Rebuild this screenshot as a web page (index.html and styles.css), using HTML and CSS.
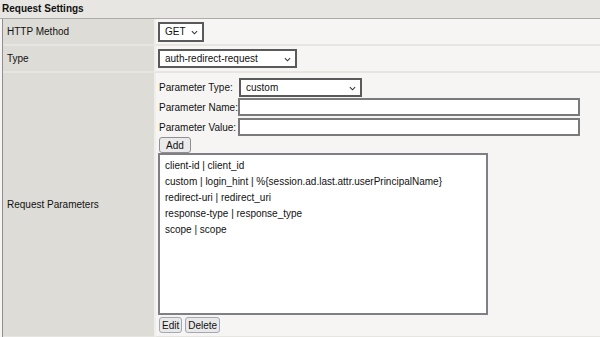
FILE: index.html
```html
<!DOCTYPE html>
<html lang="en">
<head>
  <meta charset="UTF-8" />
  <title>Request Settings</title>
  <link rel="stylesheet" href="styles.css">
</head>
<body>

  <div class="panel">
    <div class="panel-title">Request Settings</div>

    <table class="settings">
      <tr class="short">
        <th>HTTP Method</th>
        <td>
          <span class="dropdown method">
            <select><option>GET</option><option>POST</option></select>
            <svg viewBox="0 0 8 5"><path d="M1 1 L4 4 L7 1" /></svg>
          </span>
        </td>
      </tr>
      <tr class="short">
        <th>Type</th>
        <td>
          <span class="dropdown type">
            <select><option>auth-redirect-request</option></select>
            <svg viewBox="0 0 8 5"><path d="M1 1 L4 4 L7 1" /></svg>
          </span>
        </td>
      </tr>
      <tr>
        <th>Request Parameters</th>
        <td class="params">
          <div class="field first">
            <label>Parameter Type:</label>
            <span class="dropdown ptype">
              <select><option>custom</option></select>
              <svg viewBox="0 0 8 5"><path d="M1 1 L4 4 L7 1" /></svg>
            </span>
          </div>
          <div class="field">
            <label for="pname">Parameter Name:</label>
            <input type="text" id="pname">
          </div>
          <div class="field">
            <label for="pvalue">Parameter Value:</label>
            <input type="text" id="pvalue">
          </div>
          <button type="button" class="btn add">Add</button>

          <div class="listbox">
            <div>client-id | client_id</div>
            <div>custom | login_hint | %{session.ad.last.attr.userPrincipalName}</div>
            <div>redirect-uri | redirect_uri</div>
            <div>response-type | response_type</div>
            <div>scope | scope</div>
          </div>

          <div class="actions">
            <button type="button" class="btn small">Edit</button>
            <button type="button" class="btn small">Delete</button>
          </div>
        </td>
      </tr>
    </table>
  </div>

</body>
</html>
```

FILE: styles.css
```css
body {
  margin: 0;
  background-color: #f6f5f3;
  font-family: 'Liberation Sans', Arial, sans-serif;
  font-size: 10px;
  color: #111;
}

.panel-title {
  height: 18px;
  line-height: 17px;
  padding-left: 2px;
  background-color: #e8e6e2;
  border-bottom: 1px solid #aeaca8;
  font-weight: bold;
}

.settings {
  width: calc(100% - 2px);
  margin-left: 2px;
  border-collapse: separate;
  border-spacing: 0;
  border-left: 1px solid #8e8e8e;
}

.settings th,
.settings td {
  box-sizing: border-box;
  border-bottom: 2px solid #e7e5e1;
}

.settings th {
  width: 153px;
  padding: 0 0 0 4px;
  background-color: #dedcd7;
  border-right: 2px solid #efeeeb;
  text-align: left;
  font-weight: normal;
}

.settings td {
  padding: 0 0 0 2px;
  background-color: #f6f5f3;
}

.settings tr.short th,
.settings tr.short td {
  height: 27px;
}

.dropdown {
  position: relative;
  display: inline-block;
  vertical-align: middle;
}

.dropdown select {
  appearance: none;
  -webkit-appearance: none;
  display: block;
  box-sizing: border-box;
  height: 19px;
  margin: 0;
  padding: 0 0 0 5px;
  border: 2px solid #5a5a5a;
  border-radius: 0;
  background: #fff;
  font: inherit;
  color: #111;
}

.dropdown svg {
  position: absolute;
  top: 8px;
  right: 6px;
  width: 7px;
  height: 5px;
  pointer-events: none;
}

.dropdown svg path {
  fill: none;
  stroke: #333;
  stroke-width: 1.2;
}

.method select {
  width: 46px;
  height: 20px;
}

.type select {
  width: 139px;
}

.ptype select {
  width: 123px;
}

.params {
  padding-top: 5px !important;
  padding-bottom: 3px !important;
  vertical-align: top;
}

.field {
  display: flex;
  align-items: center;
  height: 18px;
  margin-bottom: 2px;
  padding-left: 1px;
}

.field.first {
  height: 19px;
  margin-bottom: 1px;
}

.field label {
  width: 79px;
}

.field input {
  box-sizing: border-box;
  width: 342px;
  height: 18px;
  margin: 0;
  padding: 0 3px;
  border: 2px solid #7a7a7a;
  border-radius: 0;
  background: #fff;
  font: inherit;
}

.field .dropdown {
  margin-left: 1px;
}

.btn {
  box-sizing: border-box;
  height: 16px;
  margin: 0 0 0 1px;
  padding: 0 4px;
  background-color: #ebebeb;
  border: 1px solid #909090;
  border-radius: 3px;
  font: inherit;
  color: #111;
  line-height: 13px;
}

.add {
  display: block;
  width: 32px;
  margin-top: -1px;
  padding: 0;
}

.listbox {
  box-sizing: border-box;
  width: 330px;
  height: 162px;
  padding: 3px 0 0 5px;
  background: #fff;
  border: 2px solid #7f7f85;
}

.listbox div {
  height: 16px;
  line-height: 16px;
  white-space: nowrap;
}

.actions {
  display: flex;
  gap: 2px;
  margin-top: 2px;
}

.small {
  padding: 0 2px;
  border-color: #a3a9b2;
  background-color: #e9e9e9;
}
```
